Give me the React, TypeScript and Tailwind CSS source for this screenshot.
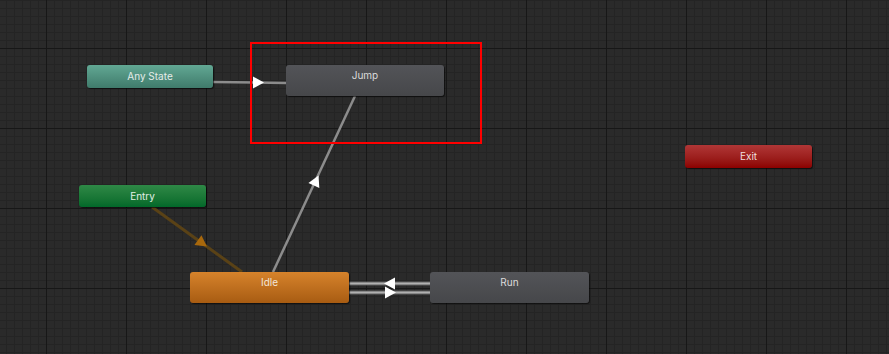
import React from "react";

function Arrow({ x, y, angle, color = "#ffffff" }: { x: number; y: number; angle: number; color?: string }) {
  return (
    <polygon
      points="-5,-6 6,0 -5,6"
      fill={color}
      transform={`translate(${x} ${y}) rotate(${angle})`}
    />
  );
}

function Canvas() {
  const a1 = (Math.atan2(96 - 272, 355 - 273) * 180) / Math.PI;
  const a2 = (Math.atan2(272 - 207, 242 - 152) * 180) / Math.PI;
  return (
    <svg width="889" height="354" className="absolute inset-0 block">
      <defs>
        <pattern id="minor" x="6" y="0" width="8" height="8" patternUnits="userSpaceOnUse">
          <rect x="0" y="0" width="1" height="8" fill="#242424" />
          <rect x="0" y="0" width="8" height="1" fill="#242424" />
        </pattern>
        <pattern id="major" x="46" y="48" width="80" height="80" patternUnits="userSpaceOnUse">
          <rect x="0" y="0" width="1" height="80" fill="#171717" />
          <rect x="0" y="0" width="80" height="1" fill="#171717" />
        </pattern>
      </defs>
      <rect width="889" height="354" fill="#2a2a2a" />
      <rect width="889" height="354" fill="url(#minor)" />
      <rect width="889" height="354" fill="url(#major)" />

      {/* Any State -> Jump */}
      <line x1="213" y1="82" x2="287" y2="83" stroke="#8c8c8c" strokeWidth="2.5" />
      <Arrow x={258} y={82.5} angle={0} />

      {/* Idle -> Jump */}
      <line x1="273" y1="272" x2="355" y2="96" stroke="#8c8c8c" strokeWidth="2.5" />
      <Arrow x={316} y={181} angle={a1} />

      {/* Entry -> Idle */}
      <line x1="152" y1="207" x2="242" y2="272" stroke="#5a4216" strokeWidth="3" />
      <Arrow x={202} y={243} angle={a2} color="#a8680c" />

      {/* Idle <-> Run */}
      <line x1="349" y1="283.5" x2="430" y2="283.5" stroke="#5e5e5e" strokeWidth="4" />
      <line x1="349" y1="283.5" x2="430" y2="283.5" stroke="#b0b0b0" strokeWidth="2" />
      <line x1="349" y1="292.5" x2="430" y2="292.5" stroke="#5e5e5e" strokeWidth="4" />
      <line x1="349" y1="292.5" x2="430" y2="292.5" stroke="#b0b0b0" strokeWidth="2" />
      <Arrow x={390} y={283.5} angle={180} />
      <Arrow x={390} y={292.5} angle={0} />
    </svg>
  );
}

const font = { fontFamily: "Inter, 'Noto Sans', sans-serif" };

export default function App() {
  return (
    <div className="relative w-[889px] h-[354px] overflow-hidden bg-[#2a2a2a]" style={font}>
      <Canvas />

      {/* Any State */}
      <div className="absolute left-[87px] top-[65px] w-[126px] h-[23px] rounded-[3px] bg-gradient-to-b from-[#62a894] to-[#3f7b6b] shadow-[1px_1px_1px_rgba(0,0,0,0.6)] flex justify-center pt-[4px]">
        <span className="text-[10px] leading-[14px] text-[#e4ece9]">Any State</span>
      </div>

      {/* Jump */}
      <div className="absolute left-[286px] top-[65px] w-[158px] h-[31px] rounded-[3px] bg-gradient-to-b from-[#535458] to-[#46474a] shadow-[1px_1px_1px_rgba(0,0,0,0.6)] flex justify-center pt-[3px]">
        <span className="text-[10px] leading-[14px] text-[#dcdcdc]">Jump</span>
      </div>

      {/* selection rectangle */}
      <div className="absolute left-[250px] top-[42px] w-[232px] h-[102px] border-2 border-[#ff0000]" />

      {/* Entry */}
      <div className="absolute left-[79px] top-[185px] w-[127px] h-[22px] rounded-[3px] bg-gradient-to-b from-[#2e8946] to-[#02692a] shadow-[1px_1px_1px_rgba(0,0,0,0.6)] flex justify-center pt-[4px]">
        <span className="text-[10px] leading-[14px] text-[#e2efe6]">Entry</span>
      </div>

      {/* Idle */}
      <div className="absolute left-[190px] top-[272px] w-[159px] h-[31px] rounded-[3px] bg-gradient-to-b from-[#d6832b] to-[#a85c12] shadow-[1px_1px_1px_rgba(0,0,0,0.6)] flex justify-center pt-[3px]">
        <span className="text-[10px] leading-[14px] text-[#f3e6d8]">Idle</span>
      </div>

      {/* Run */}
      <div className="absolute left-[430px] top-[272px] w-[159px] h-[31px] rounded-[3px] bg-gradient-to-b from-[#535458] to-[#46474a] shadow-[1px_1px_1px_rgba(0,0,0,0.6)] flex justify-center pt-[3px]">
        <span className="text-[10px] leading-[14px] text-[#dcdcdc]">Run</span>
      </div>

      {/* Exit */}
      <div className="absolute left-[685px] top-[145px] w-[127px] h-[23px] rounded-[3px] bg-gradient-to-b from-[#b03636] to-[#8c0000] shadow-[1px_1px_1px_rgba(0,0,0,0.6)] flex justify-center pt-[4px]">
        <span className="text-[10px] leading-[14px] text-[#f0dede]">Exit</span>
      </div>
    </div>
  );
}
